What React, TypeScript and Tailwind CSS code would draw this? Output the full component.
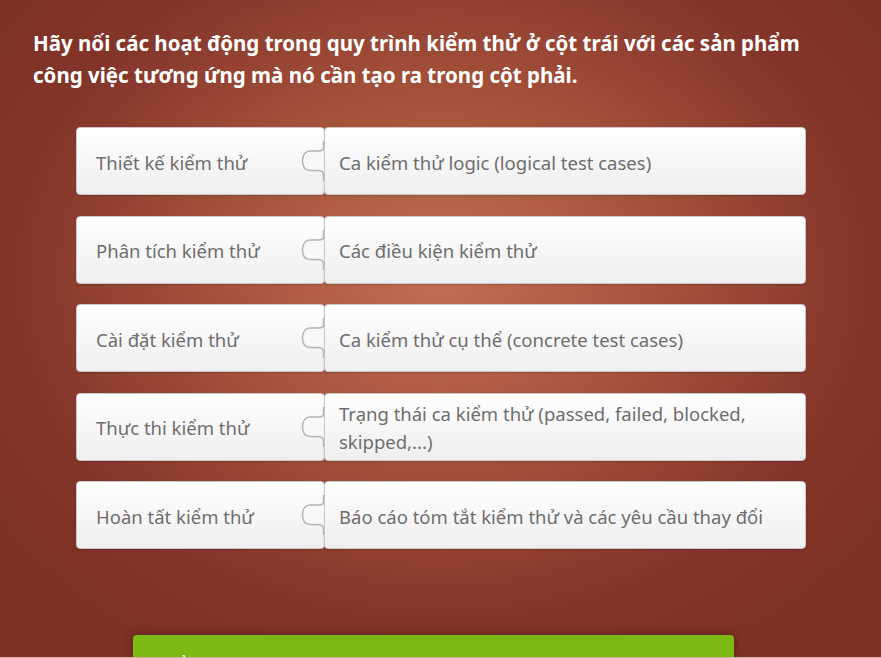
const rows: { left: string; right: string }[] = [
  { left: 'Thiết kế kiểm thử', right: 'Ca kiểm thử logic (logical test cases)' },
  { left: 'Phân tích kiểm thử', right: 'Các điều kiện kiểm thử' },
  { left: 'Cài đặt kiểm thử', right: 'Ca kiểm thử cụ thể (concrete test cases)' },
  { left: 'Thực thi kiểm thử', right: 'Trạng thái ca kiểm thử (passed, failed, blocked, skipped,...)' },
  { left: 'Hoàn tất kiểm thử', right: 'Báo cáo tóm tắt kiểm thử và các yêu cầu thay đổi' },
];

// jigsaw knob drawn over the seam between the two cards
function Knob() {
  return (
    <svg
      className="absolute left-[224px] top-1/2 -translate-y-1/2"
      width="28"
      height="40"
      viewBox="0 0 28 40"
      fill="none"
    >
      <path
        d="M23.5 7 C23.5 10 21 10 18 10 H10.5 C5.5 10 2.5 14 2.5 20 C2.5 26 5.5 29.5 10.5 29.5 H17.5 C21 29.5 23.5 30.5 23.5 33.5 V7 Z"
        fill="#f8f8f8"
      />
      <path
        d="M23.5 0 V7 C23.5 10 21 10 18 10 H10.5 C5.5 10 2.5 14 2.5 20 C2.5 26 5.5 29.5 10.5 29.5 H17.5 C21 29.5 23.5 30.5 23.5 33.5 V40"
        stroke="#b4b4b4"
        strokeWidth="1.5"
      />
    </svg>
  );
}

function MatchRow({ left, right }: { left: string; right: string }) {
  return (
    <div className="relative flex h-[68px]">
      <div className="flex w-[249px] items-center rounded-[4px] border border-[#c8c8c8] bg-gradient-to-b from-[#ffffff] to-[#efefef] pl-[19px] pt-[3px] shadow-[0_1px_2px_rgba(0,0,0,0.15)]">
        <span className="text-[18.5px] text-[#6e6e6e]">{left}</span>
      </div>
      <div className="-ml-px flex flex-1 items-center rounded-[4px] border border-[#c8c8c8] bg-gradient-to-b from-[#ffffff] to-[#efefef] pl-[14px] pr-4 pt-[3px] shadow-[0_1px_2px_rgba(0,0,0,0.15)]">
        <span className="text-[18.5px] leading-[28px] text-[#6e6e6e]">{right}</span>
      </div>
      <Knob />
    </div>
  );
}

export default function App() {
  return (
    <div
      className="relative flex h-[658px] w-full flex-col overflow-hidden bg-[radial-gradient(ellipse_60%_65%_at_50%_42%,#c16f51_0%,#a3503a_45%,#84352a_80%,#7e3125_100%)]"
      style={{ fontFamily: '"Noto Sans", "Open Sans", sans-serif' }}
    >
      <h1 className="pl-[33px] pr-6 pt-[27px] text-[20.5px] font-bold leading-[32px] text-white">
        Hãy nối các hoạt động trong quy trình kiểm thử ở cột trái với các sản phẩm
        <br />
        công việc tương ứng mà nó cần tạo ra trong cột phải.
      </h1>

      <div className="ml-[76px] mt-[36px] flex w-[730px] flex-col gap-[20.5px]">
        {rows.map((r) => (
          <MatchRow key={r.left} left={r.left} right={r.right} />
        ))}
      </div>

      <div className="mt-auto flex justify-start">
        <div className="ml-[133px] h-[22px] w-[601px] rounded-t-[4px] bg-[#7cb913] pl-[27px] pt-[18px] text-[16px] font-bold leading-[20px] text-white shadow-[0_0_8px_rgba(0,0,0,0.35)]">
          Kiểm tra
        </div>
      </div>
      <div className="h-px bg-[#d8b4ac]" />
    </div>
  );
}
